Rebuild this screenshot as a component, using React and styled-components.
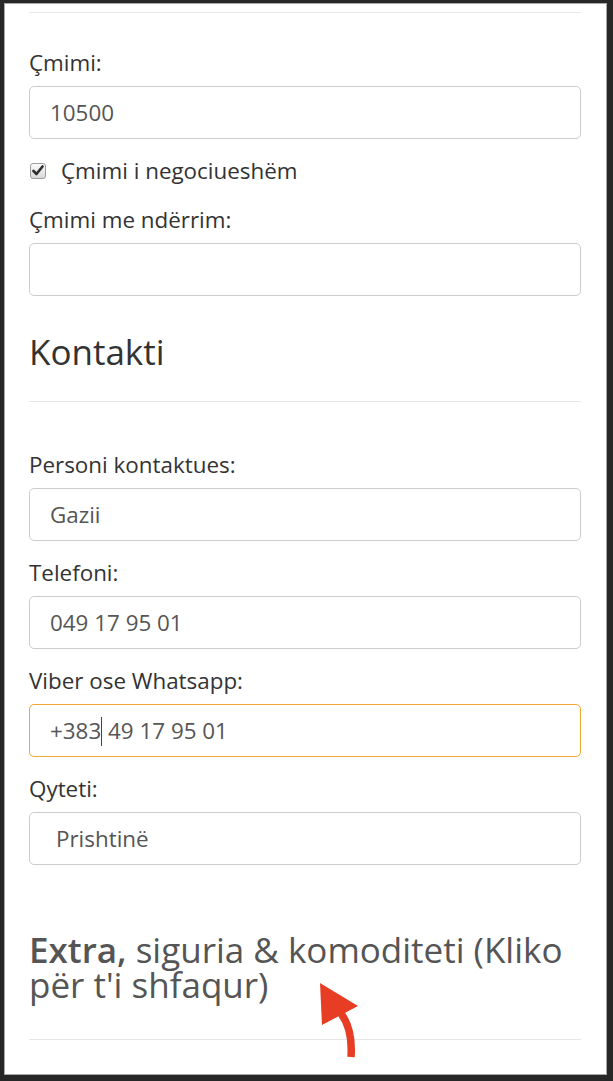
import React from "react";
import styled, { createGlobalStyle } from "styled-components";

const Global = createGlobalStyle`
  html, body { margin: 0; padding: 0; background: #272727; }
  body { font-family: "Open Sans", "Liberation Sans", Arial, sans-serif; }
  * { box-sizing: border-box; }
`;

const Frame = styled.div`
  position: relative;
  display: flex;
  flex-direction: column;
  margin: 3px 6px 6px 4px;
  height: 1072px;
  background: #fff;
  border: 1px solid #a8a8a8;
  overflow: hidden;
  padding: 0 25px 0 24px;
`;

const Rule = styled.hr`
  flex: none;
  width: 100%;
  margin: ${(p) => p.$mt || 0}px 0 0 0;
  border: 0;
  border-top: 1px solid #e6e6e6;
  height: 0;
`;

const Section = styled.div`
  padding-top: ${(p) => p.$pt || 0}px;
`;

const FormGroup = styled.div`
  margin-bottom: 16px;
`;

const Label = styled.label`
  display: block;
  font-size: 22.4px;
  line-height: 31px;
  color: #333;
  margin-bottom: 8px;
`;

const Field = styled.div`
  display: flex;
  align-items: center;
  height: 53px;
  border: 1px solid ${(p) => (p.$focus ? "#f0a732" : "#cccccc")};
  border-radius: 5px;
  padding: 0 20px 0 ${(p) => (p.$indent ? 26 : 20)}px;
  font-size: 22.4px;
  color: #555;
  white-space: pre;
  background: #fff;
`;

const Caret = styled.span`
  display: inline-block;
  width: 0;
  height: 29px;
  border-left: 1.5px solid #444;
  margin-top: 2px;
`;

const CheckRow = styled.label`
  display: flex;
  align-items: center;
  gap: 15px;
  margin: 2px 0 18px 1px;
  font-size: 22.4px;
  line-height: 31px;
  color: #333;
`;

const CheckBox = styled.span`
  flex: none;
  width: 16px;
  height: 16px;
  border: 1px solid #9c9c9c;
  border-radius: 3px;
  background: linear-gradient(#fbfbfb, #d9d9d9);
  display: flex;
  align-items: center;
  justify-content: center;
`;

const Heading = styled.h3`
  margin: ${(p) => p.$mt}px 0 ${(p) => p.$mb}px 0;
  font-size: 35px;
  line-height: ${(p) => p.$lh};
  font-weight: 400;
  color: ${(p) => p.$color || "#333"};
  cursor: ${(p) => (p.$click ? "pointer" : "default")};
  b { font-weight: 600; }
`;

const Arrow = styled.svg`
  position: absolute;
  left: 305px;
  top: 971px;
`;

function Input({ label, value, focus, indent, children }) {
  return (
    <FormGroup>
      <Label>{label}</Label>
      <Field $focus={focus} $indent={indent} role="textbox">
        {children || value}
      </Field>
    </FormGroup>
  );
}

export default function App() {
  return (
    <>
      <Global />
      <Frame>
        <Rule $mt={8} />
        <Section $pt={34}>
          <Input label="Çmimi:" value="10500" />
          <CheckRow>
            <CheckBox>
              <svg width="12" height="11" viewBox="0 0 12 11">
                <path d="M1.5 6 L4.5 9 L10.5 1.5" fill="none" stroke="#2e2e2e" strokeWidth="2.6" strokeLinecap="round" strokeLinejoin="round" />
              </svg>
            </CheckBox>
            Çmimi i negociueshëm
          </CheckRow>
          <Input label="Çmimi me ndërrim:" value="" />
        </Section>
        <Heading $mt={21} $mb={29} $lh={1.1}>Kontakti</Heading>
        <Rule />
        <Section $pt={47}>
          <Input label="Personi kontaktues:" value="Gazii" />
          <Input label="Telefoni:" value="049 17 95 01" />
          <Input label="Viber ose Whatsapp:" focus>
            {"+383"}
            <Caret />
            {" 49 17 95 01"}
          </Input>
          <Input label="Qyteti:" value="Prishtinë" indent />
        </Section>
        <Heading $mt={51} $mb={37} $lh="35px" $color="#555" $click>
          <b>Extra,</b> siguria &amp; komoditeti (Kliko për t'i shfaqur)
        </Heading>
        <Rule />
        <Arrow width="60" height="90" viewBox="0 0 60 90">
          <path d="M29 36 Q43 52 41 82" fill="none" stroke="#e63d24" strokeWidth="7.5" />
          <polygon points="10,8 48,31 12,50" fill="#e63d24" />
        </Arrow>
      </Frame>
    </>
  );
}
